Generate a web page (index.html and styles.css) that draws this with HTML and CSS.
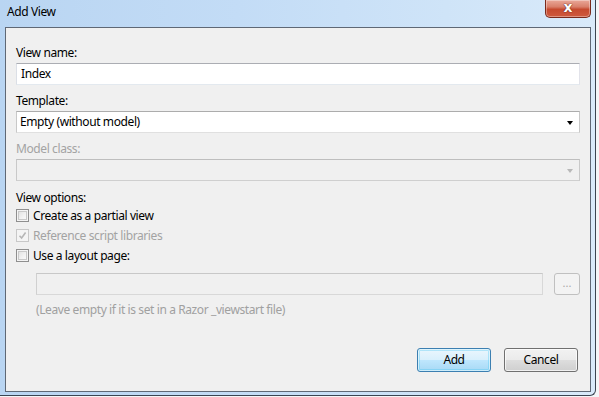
FILE: index.html
```html
<!DOCTYPE html>
<html>
<head>
<meta charset="utf-8">
<link rel="stylesheet" href="styles.css">
</head>
<body>
<div class="window">
  <div class="titlebar">
    <span class="title">Add View</span>
    <div class="close"><span>x</span></div>
  </div>
  <div class="client">
    <div class="label">View name:</div>
    <div class="textbox">Index</div>
    <div class="label gap">Template:</div>
    <div class="combo"><span>Empty (without model)</span><span class="arrow"></span></div>
    <div class="label gap disabled">Model class:</div>
    <div class="combo off"><span></span><span class="arrow grey"></span></div>
    <div class="label gap2">View options:</div>
    <div class="check"><span class="box"></span><span>Create as a partial view</span></div>
    <div class="check disabled"><span class="box checked">
      <svg width="9" height="9" viewBox="0 0 9 9"><path d="M1.5 4.8 L3.6 7 L7.6 1.5" fill="none" stroke="#b6b6b6" stroke-width="1.6"/></svg>
    </span><span>Reference script libraries</span></div>
    <div class="check"><span class="box"></span><span>Use a layout page:</span></div>
    <div class="layoutrow">
      <div class="textbox off flexgrow"></div>
      <div class="browse">...</div>
    </div>
    <div class="hint">(Leave empty if it is set in a Razor _viewstart file)</div>
    <div class="buttons">
      <div class="btn default">Add</div>
      <div class="btn">Cancel</div>
    </div>
  </div>
</div>
</body>
</html>
```
FILE: styles.css
```css
html, body {
  margin: 0;
  padding: 0;
  background: #f4f6f8;
  width: 599px;
  height: 397px;
  overflow: hidden;
  font-family: "Noto Sans", "Open Sans", sans-serif;
  font-size: 12px;
  letter-spacing: -0.4px;
  color: #000;
}
.window {
  width: 595px;
  height: 395px;
  background: linear-gradient(90deg, #b9d5f2 0%, #c3dcf6 40%, #cfe4f8 75%, #d9eafa 100%);
  border-right: 1px solid #3b4552;
  border-bottom: 1px solid #3b4552;
  border-bottom-right-radius: 6px;
  display: flex;
  flex-direction: column;
  box-sizing: content-box;
}
.titlebar {
  height: 27px;
  display: flex;
  justify-content: space-between;
  align-items: flex-start;
}
.title {
  padding: 4px 0 0 7px;
  font-size: 12px;
  line-height: 16px;
  color: #000;
}
.close {
  width: 46px;
  height: 18px;
  margin-right: 4px;
  box-sizing: border-box;
  border: 1px solid #7a2a1c;
  border-top: none;
  border-radius: 0 0 5px 5px;
  background: linear-gradient(180deg, #eaa899 0%, #d9806b 40%, #c64a2f 55%, #cf5a3e 100%);
  box-shadow: inset 0 0 0 1px rgba(255,255,255,0.35);
  display: flex;
  justify-content: center;
  align-items: center;
}
.close span {
  font-family: "DejaVu Sans", sans-serif;
  font-weight: bold;
  font-size: 14px;
  line-height: 14px;
  letter-spacing: 0;
  color: #fff;
  text-shadow: 0 0 1px #5a1a10, 0 0 1px #5a1a10;
  margin-top: -3px;
}
.client {
  margin-left: 5px;
  background: #f0f0f0;
  border: 1px solid #5f6875;
  padding: 17px 10px 0 10px;
  box-sizing: content-box;
  display: flex;
  flex-direction: column;
  width: 564px;
  height: 346px;
}
.label {
  line-height: 15px;
  height: 15px;
}
.gap { margin-top: 8px; }
.gap2 { margin-top: 9px; }
.disabled { color: #a3a3a3; }
.textbox, .combo {
  margin-top: 3px;
  height: 22px;
  box-sizing: border-box;
  background: #fff;
  border: 1px solid;
  border-color: #abadb3 #e2e3ea #e3e9ef #dbdfe6;
  padding: 0 4px;
  line-height: 20px;
  display: flex;
  align-items: center;
}
.combo {
  justify-content: space-between;
  padding: 0 3px 0 3px;
  border-color: #acacac #c8c8c8 #e0e0e0 #c8c8c8;
}
.combo.off {
  background: #f0f0f0;
  border-color: #bebebe #c9c9c9 #cfcfcf #c9c9c9;
}
.arrow {
  width: 0;
  height: 0;
  border-left: 3.5px solid transparent;
  border-right: 3.5px solid transparent;
  border-top: 4px solid #000;
  margin-right: 3px;
  margin-top: 1px;
}
.arrow.grey { border-top-color: #b8b8b8; }
.textbox.off {
  background: #f0f0f0;
  border-color: #c8c8c8 #d8d8d8 #d8d8d8 #d0d0d0;
}
.check {
  height: 20px;
  display: flex;
  align-items: center;
  line-height: 15px;
}
.box {
  width: 13px;
  height: 13px;
  box-sizing: border-box;
  border: 1px solid #8f8f8f;
  background: linear-gradient(135deg, #dcdcdc 0%, #f3f3f3 60%, #fbfbfb 100%);
  box-shadow: inset 0 0 0 1px #f4f4f4, inset 0 0 0 2px #c9c9c9;
  margin-right: 4px;
  display: flex;
  align-items: center;
  justify-content: center;
}
.box.checked {
  border-color: #c8c8c8;
  background: #f4f4f4;
  box-shadow: none;
}
.layoutrow {
  margin-top: 8px;
  margin-left: 20px;
  display: flex;
  gap: 11px;
}
.layoutrow .textbox { margin-top: 0; }
.flexgrow { flex: 1; }
.browse {
  width: 26px;
  height: 22px;
  box-sizing: border-box;
  border: 1px solid #c0c0c0;
  border-radius: 3px;
  background: #f3f3f3;
  color: #a8a8a8;
  text-align: center;
  line-height: 18px;
  font-size: 11px;
  letter-spacing: 0;
}
.hint {
  margin-top: 7px;
  margin-left: 20px;
  line-height: 15px;
  color: #a0a0a0;
}
.buttons {
  margin-top: 31px;
  display: flex;
  justify-content: flex-end;
  gap: 13px;
  padding-right: 2px;
}
.btn {
  width: 74px;
  height: 24px;
  box-sizing: border-box;
  border: 1px solid #707070;
  border-radius: 3px;
  background: linear-gradient(180deg, #f2f2f2 0%, #ebebeb 48%, #dddddd 52%, #cfcfcf 100%);
  box-shadow: inset 0 0 0 1px rgba(255,255,255,0.7);
  text-align: center;
  line-height: 21px;
}
.btn.default {
  border-color: #3c7fb1;
  background: linear-gradient(180deg, #eaf6fd 0%, #d9f0fc 48%, #bee6fd 52%, #a7d9f5 100%);
  box-shadow: inset 0 0 0 1px rgba(255,255,255,0.6), inset 0 0 0 2px rgba(72,197,242,0.35);
}
```
